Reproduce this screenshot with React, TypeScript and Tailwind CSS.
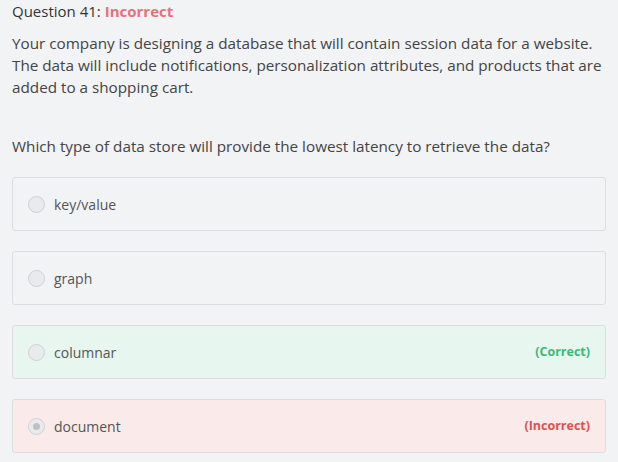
import React from "react";

type Opt = { label: string; state?: "correct" | "incorrect"; checked?: boolean };

const options: Opt[] = [
  { label: "key/value" },
  { label: "graph" },
  { label: "columnar", state: "correct" },
  { label: "document", state: "incorrect", checked: true },
];

export default function App() {
  return (
    <div className="w-[618px] h-[462px] bg-[#f2f3f5] px-[12px] text-[#333] overflow-hidden" style={{ fontFamily: '"Open Sans", "Noto Sans", sans-serif' }}>
      <div className="text-[15px] leading-[22px]">
        Question 41: <span className="font-bold text-[#e9707a]">Incorrect</span>
      </div>
      <p className="mt-[10px] text-[15.25px] leading-[22px] text-[#444] w-[594px]">
        Your company is designing a database that will contain session data for a website. The data will include notifications, personalization attributes, and products that are added to a shopping cart.
      </p>
      <p className="mt-[37px] text-[15.25px] leading-[22px] text-[#444]">
        Which type of data store will provide the lowest latency to retrieve the data?
      </p>
      <div className="mt-[20px] flex flex-col gap-[20px] w-[594px]">
        {options.map((o) => (
          <div
            key={o.label}
            className={
              "h-[54px] rounded-[3px] border border-[#dcdde0] flex items-center pl-[15px] pr-[15px] " +
              (o.state === "correct" ? "bg-[#e7f6ef]" : o.state === "incorrect" ? "bg-[#fbeaea]" : "bg-[#f2f3f5]")
            }
          >
            <span className="w-[17px] h-[17px] rounded-full border border-[#cfd0d3] bg-[#e9eaed] flex items-center justify-center">
              {o.checked && <span className="w-[7px] h-[7px] rounded-full bg-[#bfc0c3]" />}
            </span>
            <span className="ml-[9px] text-[14px] text-[#555]">{o.label}</span>
            {o.state === "correct" && (
              <span className="ml-auto text-[12.5px] font-bold text-[#3cb878]">(Correct)</span>
            )}
            {o.state === "incorrect" && (
              <span className="ml-auto text-[12.5px] font-bold text-[#d9534f]">(Incorrect)</span>
            )}
          </div>
        ))}
      </div>
    </div>
  );
}
